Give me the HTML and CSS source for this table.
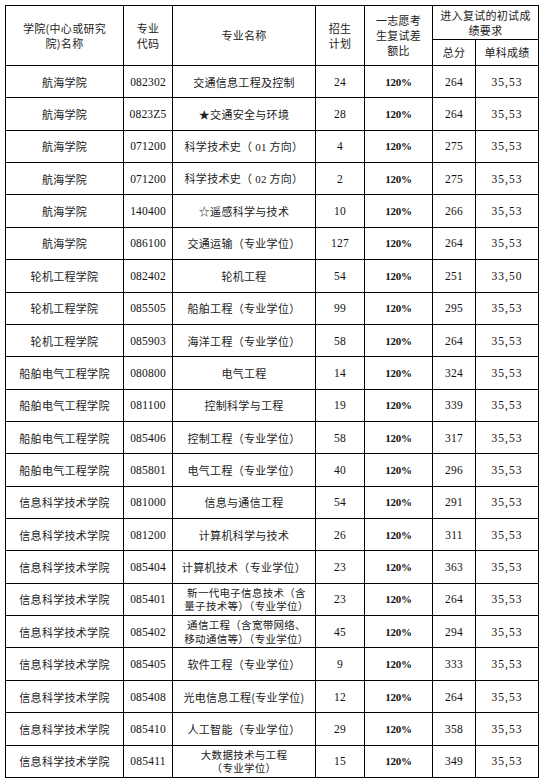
FILE: index.html
```html
<!DOCTYPE html>
<html lang="zh">
<head>
<meta charset="utf-8">
<link rel="stylesheet" href="styles.css">
</head>
<body>
<table class="grid">
<colgroup>
<col class="c1"><col class="c2"><col class="c3"><col class="c4"><col class="c5"><col class="c6"><col class="c7">
</colgroup>
<thead>
<tr class="h1">
<th rowspan="2" class="wide">学院(中心或研究<br>院)名称</th>
<th rowspan="2">专业<br>代码</th>
<th rowspan="2">专业名称</th>
<th rowspan="2">招生<br>计划</th>
<th rowspan="2">一志愿考<br>生复试差<br>额比</th>
<th colspan="2">进入复试的初试成<br>绩要求</th>
</tr>
<tr class="h2">
<th>总分</th>
<th>单科成绩</th>
</tr>
</thead>
<tbody>
<tr><td class="zh">航海学院</td><td class="num">082302</td><td class="zh">交通信息工程及控制</td><td class="num">24</td><td class="num pct">120%</td><td class="num">264</td><td class="num sc">35,53</td></tr>
<tr><td class="zh">航海学院</td><td class="num">0823Z5</td><td class="zh">★交通安全与环境</td><td class="num">28</td><td class="num pct">120%</td><td class="num">264</td><td class="num sc">35,53</td></tr>
<tr><td class="zh">航海学院</td><td class="num">071200</td><td class="zh">科学技术史（ <span class="n">01</span> 方向）</td><td class="num">4</td><td class="num pct">120%</td><td class="num">275</td><td class="num sc">35,53</td></tr>
<tr><td class="zh">航海学院</td><td class="num">071200</td><td class="zh">科学技术史（ <span class="n">02</span> 方向）</td><td class="num">2</td><td class="num pct">120%</td><td class="num">275</td><td class="num sc">35,53</td></tr>
<tr><td class="zh">航海学院</td><td class="num">140400</td><td class="zh">☆遥感科学与技术</td><td class="num">10</td><td class="num pct">120%</td><td class="num">266</td><td class="num sc">35,53</td></tr>
<tr><td class="zh">航海学院</td><td class="num">086100</td><td class="zh">交通运输（专业学位）</td><td class="num">127</td><td class="num pct">120%</td><td class="num">264</td><td class="num sc">35,53</td></tr>
<tr><td class="zh">轮机工程学院</td><td class="num">082402</td><td class="zh">轮机工程</td><td class="num">54</td><td class="num pct">120%</td><td class="num">251</td><td class="num sc">33,50</td></tr>
<tr><td class="zh">轮机工程学院</td><td class="num">085505</td><td class="zh">船舶工程（专业学位）</td><td class="num">99</td><td class="num pct">120%</td><td class="num">295</td><td class="num sc">35,53</td></tr>
<tr><td class="zh">轮机工程学院</td><td class="num">085903</td><td class="zh">海洋工程（专业学位）</td><td class="num">58</td><td class="num pct">120%</td><td class="num">264</td><td class="num sc">35,53</td></tr>
<tr><td class="zh">船舶电气工程学院</td><td class="num">080800</td><td class="zh">电气工程</td><td class="num">14</td><td class="num pct">120%</td><td class="num">324</td><td class="num sc">35,53</td></tr>
<tr><td class="zh">船舶电气工程学院</td><td class="num">081100</td><td class="zh">控制科学与工程</td><td class="num">19</td><td class="num pct">120%</td><td class="num">339</td><td class="num sc">35,53</td></tr>
<tr><td class="zh">船舶电气工程学院</td><td class="num">085406</td><td class="zh">控制工程（专业学位）</td><td class="num">58</td><td class="num pct">120%</td><td class="num">317</td><td class="num sc">35,53</td></tr>
<tr><td class="zh">船舶电气工程学院</td><td class="num">085801</td><td class="zh">电气工程（专业学位）</td><td class="num">40</td><td class="num pct">120%</td><td class="num">296</td><td class="num sc">35,53</td></tr>
<tr><td class="zh">信息科学技术学院</td><td class="num">081000</td><td class="zh">信息与通信工程</td><td class="num">54</td><td class="num pct">120%</td><td class="num">291</td><td class="num sc">35,53</td></tr>
<tr><td class="zh">信息科学技术学院</td><td class="num">081200</td><td class="zh">计算机科学与技术</td><td class="num">26</td><td class="num pct">120%</td><td class="num">311</td><td class="num sc">35,53</td></tr>
<tr><td class="zh">信息科学技术学院</td><td class="num">085404</td><td class="zh">计算机技术（专业学位）</td><td class="num">23</td><td class="num pct">120%</td><td class="num">363</td><td class="num sc">35,53</td></tr>
<tr><td class="zh">信息科学技术学院</td><td class="num">085401</td><td class="zh two"><div class="ln">新一代电子信息技术（含</div><div class="ln">量子技术等）（专业学位）</div></td><td class="num">23</td><td class="num pct">120%</td><td class="num">264</td><td class="num sc">35,53</td></tr>
<tr><td class="zh">信息科学技术学院</td><td class="num">085402</td><td class="zh two"><div class="ln">通信工程（含宽带网络、</div><div class="ln">移动通信等）（专业学位）</div></td><td class="num">45</td><td class="num pct">120%</td><td class="num">294</td><td class="num sc">35,53</td></tr>
<tr><td class="zh">信息科学技术学院</td><td class="num">085405</td><td class="zh">软件工程（专业学位）</td><td class="num">9</td><td class="num pct">120%</td><td class="num">333</td><td class="num sc">35,53</td></tr>
<tr><td class="zh">信息科学技术学院</td><td class="num">085408</td><td class="zh">光电信息工程(专业学位)</td><td class="num">12</td><td class="num pct">120%</td><td class="num">264</td><td class="num sc">35,53</td></tr>
<tr><td class="zh">信息科学技术学院</td><td class="num">085410</td><td class="zh">人工智能（专业学位）</td><td class="num">29</td><td class="num pct">120%</td><td class="num">358</td><td class="num sc">35,53</td></tr>
<tr><td class="zh">信息科学技术学院</td><td class="num">085411</td><td class="zh two center"><div class="ln">大数据技术与工程</div><div class="ln">（专业学位）</div></td><td class="num">15</td><td class="num pct">120%</td><td class="num">349</td><td class="num sc">35,53</td></tr>
</tbody>
</table>
</body>
</html>
```
FILE: styles.css
```css
html, body {
  margin: 0;
  padding: 0;
  background: #fff;
}
body {
  padding: 5px 0 0 5px;
  font-family: "Noto Sans CJK SC", sans-serif;
  color: #222;
}
.grid {
  border-collapse: collapse;
  table-layout: fixed;
  width: 533px;
}
.c1 { width: 118px; }
.c2 { width: 49px; }
.c3 { width: 143px; }
.c4 { width: 49px; }
.c5 { width: 68px; }
.c6 { width: 43px; }
.c7 { width: 63px; }
.grid th, .grid td {
  border: 1px solid #000;
  padding: 0;
  text-align: center;
  vertical-align: middle;
  overflow: hidden;
  white-space: nowrap;
}
.grid th {
  font-weight: normal;
  font-size: 11px;
  line-height: 15px;
  letter-spacing: 0.3px;
}
.h1 { height: 34px; }
.h2 { height: 26px; }
.grid tbody tr { height: 32.36px; }
.zh {
  font-size: 11px;
  line-height: 14px;
  letter-spacing: 0.3px;
  font-family: "Noto Sans CJK SC", sans-serif;
}
.two {
  text-align: left;
  padding-left: 5px !important;
  font-size: 10.5px;
}
.two .ln {
  height: 13.5px;
  line-height: 13.5px;
  overflow: visible;
}
.two.center {
  text-align: center;
  padding-left: 0 !important;
}
.n {
  font-family: "Liberation Serif", serif;
  font-size: 11px;
}
.num {
  font-family: "Liberation Serif", "Times New Roman", serif;
  font-size: 11.5px;
  letter-spacing: 0.2px;
  color: #111;
}
.sc { letter-spacing: 1px; }
.pct { font-size: 11px; letter-spacing: -0.2px; font-weight: bold; }
```
